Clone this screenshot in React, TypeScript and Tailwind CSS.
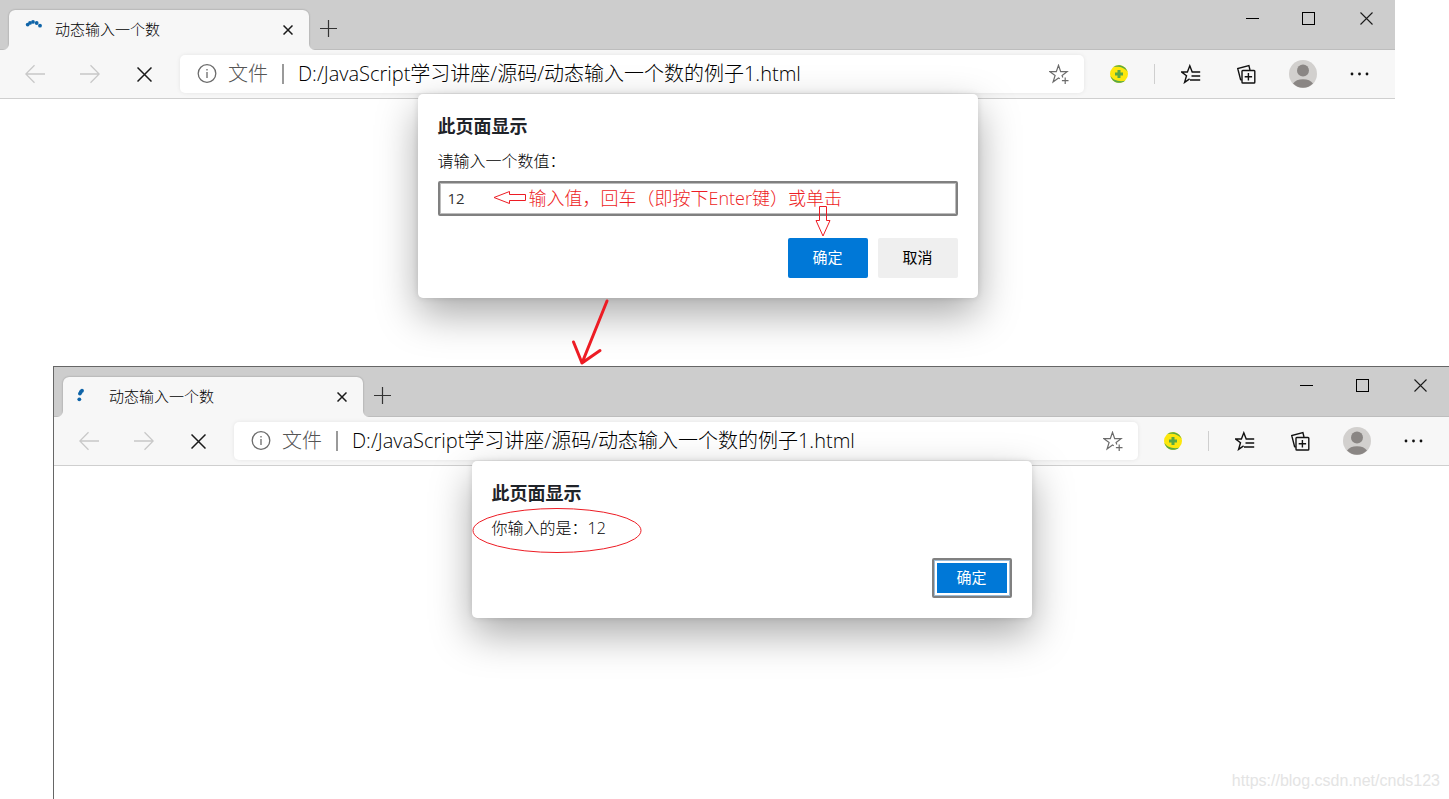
import { ReactNode, useId, useState } from 'react';

const PAGE_TITLE = '动态输入一个数';
const PAGE_URL = 'D:/JavaScript学习讲座/源码/动态输入一个数的例子1.html';

// Dots of the loading spinner, in a 20x20 box
const SPINNER_TOP = [
  [3.7, 4.6],
  [6, 2.9],
  [9, 1.9],
  [12.7, 3],
  [16, 5.7],
];
const SPINNER_LEFT = [
  [4, 3.7],
  [2.8, 5],
  [1.9, 6.6],
  [1.3, 12.3],
];

interface IconButtonProps {
  label: string;
  className?: string;
  children: ReactNode;
}

function IconButton({ label, className = '', children }: IconButtonProps) {
  return (
    <button type="button" aria-label={label} className={`flex shrink-0 items-center justify-center ${className}`}>
      {children}
    </button>
  );
}

function ArrowIcon({ forward = false }: { forward?: boolean }) {
  return (
    <svg width="20" height="20" viewBox="0 0 20 20" fill="none" stroke="#c8c8c8" strokeWidth="1.3" className={forward ? 'rotate-180' : ''}>
      <path d="M20 10H1M9.5 1.3L0.8 10l8.7 8.7" />
    </svg>
  );
}

function CrossIcon({ size, width = 1.3 }: { size: number; width?: number }) {
  return (
    <svg width={size} height={size} viewBox={`0 0 ${size} ${size}`} fill="none" stroke="#1a1a1a" strokeWidth={width}>
      <path d={`M0.5 0.5L${size - 0.5} ${size - 0.5}M${size - 0.5} 0.5L0.5 ${size - 0.5}`} />
    </svg>
  );
}

function InfoIcon() {
  return (
    <svg width="20" height="20" viewBox="0 0 20 20" fill="none" stroke="#6b6b6b" strokeWidth="1.3" className="shrink-0">
      <circle cx="10" cy="9.5" r="8.8" />
      <path d="M10 8v6M10 4.9v1.6" />
    </svg>
  );
}

function AddFavoriteIcon() {
  return (
    <svg width="20" height="20" viewBox="0 0 20 20" fill="none" stroke="#6b6b6b" strokeWidth="1.2">
      <path d="M10.8 14.7L9.5 13.9l-5.4 4.1 2-6.5L0.9 7.7h6.4L9.5 1.3l2.2 6.4h6.4l-5 3.8 0.7 2" />
      <path d="M16.2 13.4v6.6M12.9 16.7h6.6" />
    </svg>
  );
}

function ExtensionIcon() {
  return (
    <svg width="20" height="20" viewBox="0 0 20 20">
      <circle cx="10" cy="10" r="9" fill="#fde70c" />
      <path d="M4 3.2C8-0.4 16.4 0.4 18.6 8c-2.4-3.8-7.6-6-14.6-4.8z" fill="#57a846" />
      <path d="M16 16.8C12 20.4 3.6 19.6 1.4 12c2.4 3.8 7.6 6 14.6 4.8z" fill="#57a846" />
      <path d="M10 6v8M6 10h8" stroke="#57a846" strokeWidth="3" />
    </svg>
  );
}

function FavoritesIcon() {
  return (
    <svg width="20" height="20" viewBox="0 0 20 20" fill="none" stroke="#111" strokeWidth="1.4">
      <path d="M8.6 14.9L3.6 18.4l1.9-6.6L0.6 8h5.8L8.8 1.8 11.2 8H19.2" />
      <path d="M10.5 12h8.7M9 16h10.2" />
    </svg>
  );
}

function CollectionsIcon() {
  return (
    <svg width="20" height="20" viewBox="0 0 20 20" fill="none" stroke="#111" strokeWidth="1.4">
      <path d="M4.8 16L3.6 15.6 0.7 4.5 11.9 1.6l1.1 4.4" />
      <rect x="5" y="6.5" width="12.8" height="12.5" rx="0.8" />
      <path d="M11.4 9v7.4M7.7 12.7H15.1" />
    </svg>
  );
}

function AvatarIcon() {
  return (
    <svg width="28" height="28" viewBox="0 0 28 28">
      <circle cx="14" cy="14" r="14" fill="#d2d0ce" />
      <circle cx="14" cy="10.6" r="6" fill="#8a8684" />
      <path d="M4 23.6a11 7.4 0 0 1 20 0A14 14 0 0 1 4 23.6z" fill="#8a8684" />
    </svg>
  );
}

function Tab({ spinner }: { spinner: number[][] }) {
  return (
    <div className="relative ml-[9px] flex h-10 w-[300px] items-center rounded-t-md bg-[#f7f7f7] pr-4 pl-[15px] shadow-[0_0_2px_rgba(0,0,0,0.3)]">
      <svg width="20" height="20" viewBox="0 0 20 20" fill="#0f64a8" className="shrink-0 overflow-visible">
        {spinner.map(([x, y]) => (
          <circle key={x} cx={x} cy={y} r="1.9" />
        ))}
      </svg>
      <span className="ml-[11px] flex-1 pb-0.5 text-[15px] leading-5 text-black">{PAGE_TITLE}</span>
      <IconButton label="关闭标签页" className="size-[10px]">
        <CrossIcon size={10} width={1.5} />
      </IconButton>
      {/* Flared feet */}
      <svg width="312" height="6" viewBox="0 0 312 6" fill="#f7f7f7" className="absolute -left-1.5 bottom-0">
        <path d="M0 6a6 6 0 0 0 6-6v6zM312 6a6 6 0 0 1-6-6v6z" />
      </svg>
    </div>
  );
}

function TitleBar({ spinner }: { spinner: number[][] }) {
  return (
    <header className="flex h-[50px] items-end justify-between bg-[#cdcdcd] shadow-[inset_0_-1px_0_#bdbdbd]">
      <div className="flex items-end">
        <Tab spinner={spinner} />
        <IconButton label="新建标签页" className="mb-[13px] ml-[11px] size-[17px]">
          <svg width="17" height="17" viewBox="0 0 17 17" stroke="#333" strokeWidth="1.2">
            <path d="M8.5 0v17M0 8.5h17" />
          </svg>
        </IconButton>
      </div>
      <div className="flex h-9 self-start">
        <IconButton label="最小化" className="w-14">
          <svg width="13" height="13" stroke="#000" fill="none">
            <path d="M0 6.5h13" />
          </svg>
        </IconButton>
        <IconButton label="最大化" className="w-[57px]">
          <svg width="13" height="13" stroke="#000" fill="none">
            <rect x="0.5" y="0.5" width="12" height="12" />
          </svg>
        </IconButton>
        <IconButton label="关闭" className="w-[58px]">
          <CrossIcon size={13} width={1.1} />
        </IconButton>
      </div>
    </header>
  );
}

function Toolbar() {
  return (
    <nav className="relative z-10 flex h-[49px] items-center border-b border-[#cfcfcf] bg-[#f7f7f7] pr-2 pl-[7px]">
      <IconButton label="后退" className="h-10 w-[55px]">
        <ArrowIcon />
      </IconButton>
      <IconButton label="前进" className="h-10 w-[55px]">
        <ArrowIcon forward />
      </IconButton>
      <IconButton label="停止" className="h-10 w-[55px]">
        <CrossIcon size={15} width={1.5} />
      </IconButton>

      <div className="ml-2 flex h-[38px] flex-1 items-center rounded-[5px] bg-white pr-[15px] pl-[17px] text-xl shadow-[0_0_4px_rgba(0,0,0,0.08)]">
        <InfoIcon />
        <span className="ml-[11px] shrink-0 leading-7 text-[#555]">文件</span>
        <span className="mx-[14px] h-5 w-0.5 shrink-0 bg-[#9a9a9a]" />
        <input aria-label="地址栏" defaultValue={PAGE_URL} className="min-w-0 flex-1 bg-transparent leading-7 text-black outline-none" />
        <IconButton label="收藏此页">
          <AddFavoriteIcon />
        </IconButton>
      </div>

      <IconButton label="扩展" className="mx-[25px]">
        <ExtensionIcon />
      </IconButton>
      <span className="mr-2 h-5 w-px bg-[#cfcfcf]" />
      <IconButton label="收藏夹" className="w-14">
        <FavoritesIcon />
      </IconButton>
      <IconButton label="集锦" className="w-14">
        <CollectionsIcon />
      </IconButton>
      <IconButton label="个人资料" className="w-14">
        <AvatarIcon />
      </IconButton>
      <IconButton label="设置及其他" className="w-14">
        <svg width="20" height="4" fill="#111">
          <circle cx="3" cy="2" r="1.4" />
          <circle cx="10.5" cy="2" r="1.4" />
          <circle cx="18" cy="2" r="1.4" />
        </svg>
      </IconButton>
    </nav>
  );
}

function Dialog({ children }: { children: ReactNode }) {
  return (
    <div
      role="dialog"
      className="absolute inset-x-0 top-[94px] z-20 mx-auto w-[560px] rounded-[5px] bg-white p-5 shadow-[0_16px_40px_rgba(0,0,0,0.34),0_0_6px_rgba(0,0,0,0.12)]"
    >
      <h2 className="text-lg leading-6 font-bold text-[#1f2329]">此页面显示</h2>
      {children}
    </div>
  );
}

function PromptDialog() {
  const id = useId();
  const [value, setValue] = useState('12');

  return (
    <Dialog>
      <label htmlFor={id} className="mt-[13px] block text-base leading-5 text-black">
        请输入一个数值：
      </label>
      <input
        id={id}
        value={value}
        onChange={(e) => setValue(e.target.value)}
        className="mt-[10px] block h-[35px] w-full rounded-xs border-2 border-[#808080] px-2 pb-0.5 text-[15px] font-normal text-[#333] shadow-[inset_0_0_0_1px_#bdbdbd] outline-none"
      />
      <div className="mt-[22px] flex justify-end gap-[10px] text-[15px] font-normal">
        <button type="button" className="h-10 w-20 rounded-xs bg-[#0078d7] pb-0.5 text-white">
          确定
        </button>
        <button type="button" className="h-10 w-20 rounded-xs bg-[#efefef] pb-0.5 text-black">
          取消
        </button>
      </div>

      {/* Hand-drawn notes over the dialog */}
      <p className="pointer-events-none absolute top-[92px] left-[111px] text-lg leading-6 whitespace-nowrap text-[#ed1c24]">
        输入值，回车（即按下Enter键）或单击
      </p>
      <svg width="560" height="272" fill="none" stroke="#ed1c24" className="pointer-events-none absolute top-0 left-0">
        <path d="M76 103.5L91.5 97.5V100.5H107.5V106.5H91.5V109.5z" />
        <path d="M401.5 112.5H408.5V126.5H412L405 142L398 126.5H401.5z" />
        <path d="M189 207L164 269M155.5 248L164 269L182 256.5" strokeWidth="3" strokeLinecap="round" strokeLinejoin="round" />
      </svg>
    </Dialog>
  );
}

function AlertDialog() {
  return (
    <Dialog>
      <p className="mt-[13px] text-base leading-5 text-black">你输入的是：12</p>
      <div className="mt-5 flex justify-end text-[15px] font-normal">
        <button
          type="button"
          className="h-10 w-20 rounded-xs border-2 border-[#808080] bg-[#0078d7] pb-0.5 text-white shadow-[inset_0_0_0_1px_#9dbbd5,inset_0_0_0_3px_#fff]"
        >
          确定
        </button>
      </div>
      <svg width="180" height="100" fill="none" stroke="#ed1c24" className="pointer-events-none absolute top-0 left-0">
        <ellipse cx="85" cy="69.5" rx="84" ry="22" />
      </svg>
    </Dialog>
  );
}

export default function App() {
  return (
    <div className="flex min-h-screen flex-col overflow-x-hidden bg-white font-['Open_Sans','Noto_Sans_CJK_SC',sans-serif] font-light">
      <section className="relative z-10 mr-[54px]">
        <TitleBar spinner={SPINNER_TOP} />
        <Toolbar />
        <div className="h-[267px]" />
        <PromptDialog />
      </section>

      <section className="relative z-20 ml-[53px] flex flex-1 flex-col border-t border-l border-[#666] bg-white">
        <TitleBar spinner={SPINNER_LEFT} />
        <Toolbar />
        <div className="flex flex-1 items-end justify-end pr-[9px] pb-2">
          <span className="font-['Liberation_Sans',sans-serif] text-base leading-5 text-[#e4e4e4]">https://blog.csdn.net/cnds123</span>
        </div>
        <AlertDialog />
      </section>
    </div>
  );
}
